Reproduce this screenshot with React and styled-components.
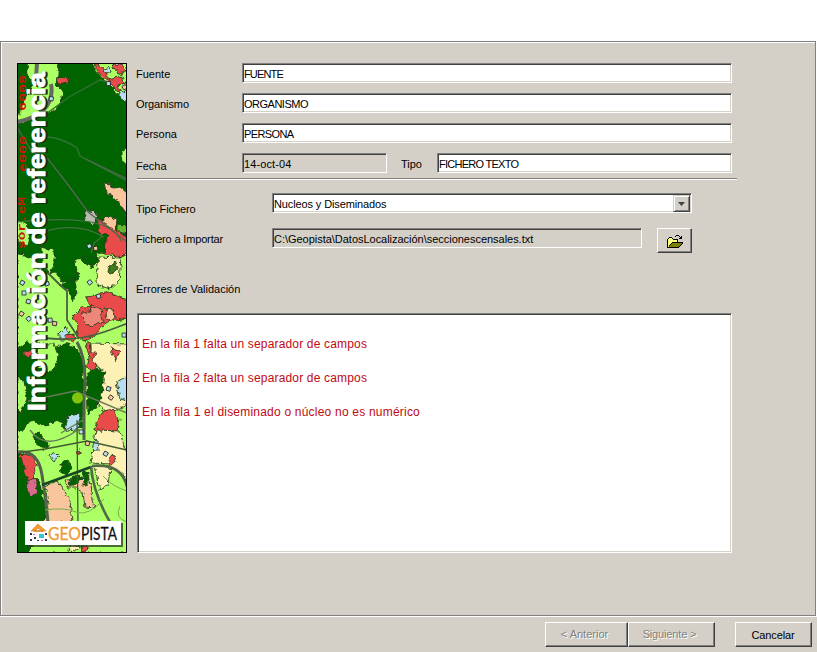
import React from "react";
import styled, { createGlobalStyle, css } from "styled-components";

const GlobalStyle = createGlobalStyle`
  * { box-sizing: border-box; }
  body { margin: 0; background: #fff; overflow: hidden; }
`;

const sunken = css`
  border: 1px solid;
  border-color: #808080 #fff #fff #808080;
  box-shadow: inset 1px 1px 0 #404040, inset -1px -1px 0 #d4d0c8;
`;
const raised = css`
  border: 1px solid;
  border-color: #fff #404040 #404040 #fff;
  box-shadow: inset -1px -1px 0 #808080;
`;

const Window = styled.div`
  width: 817px;
  height: 652px;
  padding-top: 41px;
  display: flex;
  flex-direction: column;
  font: 11px/14px "Liberation Sans", Arial, sans-serif;
  color: #000;
`;
const Panel = styled.main`
  height: 575px;
  width: 816px;
  padding: 21px 0 0 16px;
  display: flex;
  align-items: flex-start;
  gap: 9px;
  background: #d4d0c8;
  border: 1px solid #808080;
  box-shadow: inset 1px 1px 0 #fff, 1px 1px 0 #fff;
`;
const Banner = styled.svg`
  display: block;
  flex: none;
  width: 110px;
  height: 490px;
`;
const Form = styled.form`
  width: 601px;
  display: flex;
  flex-direction: column;
`;
const Row = styled.div`
  display: flex;
  align-items: flex-start;
  height: ${(p) => p.$h || 30}px;
  padding-top: ${(p) => p.$top || 0}px;
`;
const Label = styled.label`
  flex: none;
  width: ${(p) => p.$w}px;
  padding-top: ${(p) => p.$top ?? 4}px;
  padding-left: ${(p) => p.$left || 0}px;
  white-space: nowrap;
  letter-spacing: ${(p) => p.$ls || 0}px;
`;
const Field = styled.div`
  ${sunken}
  width: ${(p) => p.$w}px;
  height: 20px;
  display: flex;
  justify-content: space-between;
  padding: 3px 1px 0 1px;
  white-space: nowrap;
  background: ${(p) => (p.$disabled ? "#d4d0c8" : "#fff")};
  letter-spacing: ${(p) => p.$ls || 0}px;
`;
const DropButton = styled.span`
  border: 1px solid;
  border-color: #d4d0c8 #404040 #404040 #d4d0c8;
  box-shadow: inset 1px 1px 0 #fff, inset -1px -1px 0 #808080;
  width: 17px;
  height: 17px;
  margin-top: -2px;
  display: grid;
  place-items: center;
  background: #d4d0c8;
`;
const BrowseButton = styled.button`
  ${raised}
  width: 35px;
  height: 25px;
  margin-left: 15px;
  padding: 3px 0 0 1px;
  display: grid;
  place-items: center;
  background: #d4d0c8;
`;
const Separator = styled.div`
  width: 600px;
  height: 2px;
  margin: -5px 0 0 1px;
  background: #808080;
  border-bottom: 1px solid #fff;
`;
const ErrorBox = styled.div`
  ${sunken}
  width: 595px;
  height: 240px;
  margin-left: 1px;
  padding: 22px 4px;
  background: #fff;
  color: #c00a12;
  font-size: 12px;
  line-height: 16px;
`;
const ErrorLine = styled.p`
  margin: 0 0 18px;
  white-space: nowrap;
  letter-spacing: ${(p) => p.$ls}px;
`;
const Footer = styled.footer`
  flex: 1;
  margin-top: 1px;
  padding: 5px 5px 0 0;
  display: flex;
  justify-content: flex-end;
  background: #d4d0c8;
`;
const WizardButton = styled.button`
  ${raised}
  width: ${(p) => p.$w}px;
  height: 25px;
  margin-left: ${(p) => p.$gap || 0}px;
  padding: ${(p) => (p.disabled ? "0 4px 1px 0" : "1px 1px 0 0")};
  background: #d4d0c8;
  font: inherit;
  color: ${(p) => (p.disabled ? "#808080" : "#000")};
  text-shadow: ${(p) => (p.disabled ? "1px 1px 0 #fff" : "none")};
  letter-spacing: ${(p) => p.$ls || 0}px;
`;

const FolderIcon = () => (
  <svg width="17" height="14" viewBox="0 0 17 14" shapeRendering="crispEdges">
    <path d="M1 12V4h1V3h3v1h6v3h3v1L11 12z" fill="#ffff80" />
    <path d="M0 4h1v9H0zM1 3h1v1H1zM2 2h3v1H2zM5 3h1v1H5zM6 4h5v1H6zM10 5h1v3h-1zM5 7h11v1H5zM4 8h1v1H4zM3 9h1v1H3zM2 10h1v2H2zM1 12h11v1H1zM12 11h1v1h-1zM13 10h1v1h-1zM14 9h1v1h-1zM15 8h1v1h-1zM9 0h3v1H9zM8 1h1v1H8zM12 1h1v1h-1zM13 2h1v1h-1zM14 1h1v3h-3V3h2z" />
    <path d="M5 8h10v1h-1v1h-1v1h-1v1H2v-1h1v-1h1V9h1z" fill="#808000" />
  </svg>
);

const LIGHT = "#adff66";
const DARK = "#006400";
const RED = "#e94b4b";
const PEACH = "#f9c59c";
const CREAM = "#fdf0b4";
const BLUE = "#b8dff0";

const regions = [
  [LIGHT, "27,62 59,62 58,74 55,84 63,92 61,103 54,111 46,112 36,116 17,124 20,110 25,99 30,91 33,82 28,75"],
  [LIGHT, "92,62 128,62 128,104 121,98 113,89 104,80 96,71"],
  [RED, "94,64 102,67 107,77 113,81 119,87 113,85 104,78 99,73"],
  [RED, "109,79 121,76 126,83 118,85 122,94 114,88"],
  [RED, "113,63 121,63 126,71 118,75 115,69"],
  [RED, "56,77 68,78 70,81 64,83 58,84"],
  [BLUE, "121,90 126,92 128,99 124,102 119,95"],
  [BLUE, "104,70 110,68 111,72 106,74"],
  [LIGHT, "128,147 121,153 121,159 128,165"],
  [LIGHT, "17,220 26,224 30,232 27,245 17,240"],
  [PEACH, "104,182 114,187 119,186 128,194 128,211 123,210 118,201 106,192"],
  ["#b9bbb0", "87,209 98,215 93,225 84,219"],
  [RED, "98,220 104,219 113,228 128,237 128,252 122,257 106,255 104,242 109,235 98,232"],
  [PEACH, "102,220 110,216 117,220 115,231 108,227"],
  ["#65b82e", "118,224 128,226 128,234 118,232"],
  [LIGHT, "17,254 26,255 37,263 43,276 55,272 62,281 73,283 80,277 75,265 76,259 87,258 91,269 99,253 123,257 128,251 128,554 17,554"],
  [DARK, "80,258 91,256 100,259 94,265 86,264"],
  [LIGHT, "41,247 48,249 54,250 54,263 50,274 42,265"],
  [CREAM, "99,257 121,258 119,281 110,289 98,285 96,275"],
  ["#407b1a", "108,267 114,262 118,270 110,273"],
  [DARK, "59,285 67,282 74,276 77,294 73,301 68,290"],
  [RED, "86,297 94,296 100,294 108,292 119,297 128,300 128,318 111,321 100,328 94,337 84,341 77,337 78,325 72,317 81,308 90,306"],
  ["#ed8779", "82,312 91,311 90,305 101,309 103,322 90,326 83,320"],
  [PEACH, "105,307 113,309 114,319 107,320"],
  [BLUE, "59,333 65,327 70,331 66,339 59,339"],
  [RED, "65,335 74,334 75,341 66,341"],
  [DARK, "17,350 27,343 43,343 50,350 64,343 76,347 83,360 84,428 75,427 66,431 59,420 43,426 31,420 22,432 17,430"],
  [LIGHT, "42,344 54,344 58,354 57,363 52,371 45,372 38,367 35,355"],
  [LIGHT, "17,376 24,381 27,399 20,414 17,410"],
  [CREAM, "91,343 128,344 128,403 112,414 99,407 101,390 104,371 91,365"],
  [RED, "86,342 90,342 91,352 98,352 91,358 97,365 93,370 86,368 89,357"],
  [RED, "110,346 115,350 120,351 116,361 113,355"],
  [RED, "24,350 32,351 29,358 24,355"],
  [DARK, "87,374 94,369 105,371 103,390 99,403 88,415"],
  [BLUE, "116,382 128,376 128,401 120,399"],
  [RED, "97,422 101,412 113,409 119,419 117,431 101,437 94,430"],
  [BLUE, "68,416 81,414 77,430 65,431"],
  [CREAM, "96,430 120,431 123,444 128,455 128,479 116,470 110,464 91,463"],
  [RED, "108,459 113,455 116,462 110,465"],
  [BLUE, "94,441 98,440 99,451 92,451"],
  [BLUE, "49,455 55,452 60,457 54,461"],
  [DARK, "33,435 39,433 49,444 46,449 36,444"],
  [DARK, "60,464 68,460 72,468 67,475 61,472"],
  [RED, "76,451 80,450 80,454 77,454"],
  [DARK, "17,452 27,455 29,472 39,481 46,506 48,521 27,554 17,554"],
  [RED, "20,453 32,456 38,464 33,472 36,481 27,480 24,469"],
  ["#d86a8b", "28,481 35,477 37,492 31,497 27,490"],
  [PEACH, "45,486 57,481 70,499 72,523 44,523 48,505"],
  [PEACH, "65,481 87,474 91,485 93,500 95,508 85,507 83,493 76,488 68,488"],
  [DARK, "68,483 74,476 82,477 79,482 71,487"],
  [DARK, "83,470 89,472 88,484 84,485"],
  [CREAM, "94,466 110,466 108,486 100,490"],
  [CREAM, "70,544 80,546 77,551 69,550"],
  [RED, "81,546 88,547 87,552 82,552"],
];

const roads = [
  ["#626b5d", 4, "M37 63L36 78M51 84Q54 99 43 111Q35 118 17 122"],
  ["#2f7532", 1.4, "M46 114L69 97L100 80L108 82M46 137Q61 137 77 148L80 156L127 181"],
  ["#596657", 1.3, "M17 127L32 152L48 159L66 182L88 212L127 242M86 159L127 179"],
  ["#44733e", 1.2, "M18 222Q55 218 84 221T122 242M46 231Q79 222 104 237M103 236L94 243L91 253"],
  ["#4a603e", 1.8, "M48 273L60 285L67 291V320L78 337M44 338Q76 342 104 332T127 323"],
  ["#536349", 3, "M77 342Q88 361 84 400V440M17 452Q38 449 42 475T48 522"],
  ["#677c5b", 1.4, "M28 401L75 391L127 413M30 430Q46 453 79 429M61 433L83 420"],
  ["#405933", 1.3, "M77 420L78 525M23 452L45 449L87 441L127 450"],
  ["#174723", 2.8, "M42 485L91 467"],
  ["#526847", 2.6, "M91 466Q93 493 110 522M92 466Q122 463 127 487"],
  ["#7aad4d", 1, "M103 476Q113 487 127 491M45 510Q64 507 76 512T104 499M120 506Q114 518 127 522"],
];

const houses = [
  [22, 291], [27, 299], [21, 311], [29, 316], [48, 281], [52, 318], [57, 322], [25, 282],
  [43, 268], [92, 247], [98, 250], [53, 101], [58, 63], [117, 66], [124, 90], [107, 86],
  [122, 337], [106, 390], [108, 398], [87, 282], [96, 295], [79, 430], [86, 441], [105, 451],
];

const MapBanner = () => (
  <Banner viewBox="17 63 110 490">
    <defs>
      <filter id="rough" x="0" y="0" width="100%" height="100%">
        <feTurbulence type="fractalNoise" baseFrequency=".2" numOctaves="2" seed="7" />
        <feDisplacementMap in="SourceGraphic" scale="6" xChannelSelector="R" yChannelSelector="G" />
      </filter>
    </defs>
    <path d="M17 63h110v490H17z" fill={DARK} />
    <g filter="url(#rough)">
      {regions.map(([fill, points], i) => (
        <polygon key={i} points={points} fill={fill} stroke="#25401b" strokeWidth=".9" />
      ))}
    </g>
    {roads.map(([stroke, width, d], i) => (
      <path key={i} d={d} stroke={stroke} strokeWidth={width} fill="none" />
    ))}
    {houses.map(([x, y], i) => (
      <rect key={i} x={x} y={y} width="4" height="4" fill={i % 4 === 2 ? PEACH : BLUE} stroke="#222" strokeWidth=".8" transform={`rotate(${i * 17} ${x} ${y})`} />
    ))}
    <circle cx="77.5" cy="398" r="5.5" fill="#80c50b" />
    <g fill="#c51b0b" fontFamily="Liberation Mono, monospace" fontWeight="bold" fontSize="11">
      <text transform="translate(26 111) rotate(-90)" textLength="36" lengthAdjust="spacingAndGlyphs">6009</text>
      <text transform="translate(26 172) rotate(-90)" textLength="36" lengthAdjust="spacingAndGlyphs">e000</text>
      <text transform="translate(25 249) rotate(-90)" textLength="52" lengthAdjust="spacingAndGlyphs">sor.eM</text>
    </g>
    <g fontFamily="Liberation Sans, Arial, sans-serif" fontSize="23" fontWeight="bold">
      <text transform="translate(46.5 411.5) rotate(-90)" textLength="339" lengthAdjust="spacingAndGlyphs" fill="#132d13" stroke="#132d13" strokeWidth="1.2">Información de referencia</text>
      <text transform="translate(44.5 411) rotate(-90)" textLength="339" lengthAdjust="spacingAndGlyphs" fill="#fff" stroke="#fff" strokeWidth=".9">Información de referencia</text>
    </g>
    <path d="M27 523h96v24H27z" fill="#263c20" opacity=".75" />
    <path d="M25 521h96v24H25z" fill="#fff" />
    <path d="M31 531L38 524L46 531H42L38 528L35 531z" fill="#ef9b31" stroke="#ef9b31" />
    <path d="M34 531H43" stroke="#d27a20" strokeWidth="1.5" />
    <path d="M30 533h2v2h-2zM30 539h2v2h-2zM34 537h2v2h-2zM45 533h2v2h-2zM45 539h2v2h-2zM37 540h2v1h-2z" fill="#382e50" />
    <path d="M39 534h5v4h-5z" fill="#32c5df" />
    <path d="M33 534h2v1h-2zM41 540h2v1h-2z" fill="#d060cb" />
    <g fontFamily="Lato, sans-serif" fontSize="17" strokeWidth=".3">
      <text x="48" y="539.5" textLength="33" lengthAdjust="spacingAndGlyphs" fill="#ef9b31" stroke="#ef9b31">GEO</text>
      <text x="81" y="539.5" textLength="36" lengthAdjust="spacingAndGlyphs" fill="#111" stroke="#111">PISTA</text>
    </g>
    <rect x="17.5" y="63.5" width="109" height="489" fill="none" stroke="#000" />
  </Banner>
);

export default function App() {
  return (
    <Window>
      <GlobalStyle />
      <Panel>
        <MapBanner />
        <Form>
          <Row><Label $w={106}>Fuente</Label><Field $w={490} $ls={-0.85}>FUENTE</Field></Row>
          <Row><Label $w={106} $ls={-0.1}>Organismo</Label><Field $w={490} $ls={-0.5}>ORGANISMO</Field></Row>
          <Row><Label $w={106}>Persona</Label><Field $w={490} $ls={-0.6}>PERSONA</Field></Row>
          <Row>
            <Label $w={106} $top={6}>Fecha</Label>
            <Field $w={145} $ls={0.1} $disabled>14-oct-04</Field>
            <Label $w={50} $left={14}>Tipo</Label>
            <Field $w={295} $ls={-0.73}>FICHERO TEXTO</Field>
          </Row>
          <Separator />
          <Row $h={48} $top={13}>
            <Label $w={136} $top={9} $ls={-0.1}>Tipo Fichero</Label>
            <Field $w={420} $ls={-0.12}>
              Nucleos y Diseminados
              <DropButton>
                <svg width="7" height="4" viewBox="0 0 7 4"><path d="M0 0h7L3.5 4z" fill="#404040" /></svg>
              </DropButton>
            </Field>
          </Row>
          <Row $h={54}>
            <Label $w={136} $ls={-0.16}>Fichero a Importar</Label>
            <Field $w={370} $ls={-0.025} $disabled>C:\Geopista\DatosLocalización\seccionescensales.txt</Field>
            <BrowseButton type="button" aria-label="Abrir"><FolderIcon /></BrowseButton>
          </Row>
          <Row $h={31}><Label $w={136} $top={0}>Errores de Validación</Label></Row>
          <ErrorBox>
            <ErrorLine $ls={0.17}>En la fila 1 falta un separador de campos</ErrorLine>
            <ErrorLine $ls={0.17}>En la fila 2 falta un separador de campos</ErrorLine>
            <ErrorLine $ls={0.21}>En la fila 1 el diseminado o núcleo no es numérico</ErrorLine>
          </ErrorBox>
        </Form>
      </Panel>
      <Footer>
        <WizardButton $w={83} disabled>&lt; Anterior</WizardButton>
        <WizardButton $w={87} $ls={-0.15} disabled>Siguiente &gt;</WizardButton>
        <WizardButton $w={77} $gap={20} $ls={-0.15}>Cancelar</WizardButton>
      </Footer>
    </Window>
  );
}
